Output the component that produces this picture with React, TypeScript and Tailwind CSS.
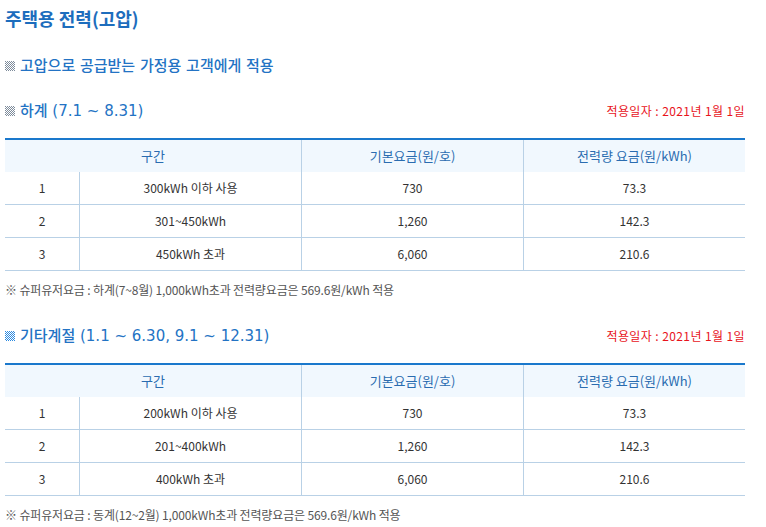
const font = { fontFamily: '"Noto Sans CJK KR", "Noto Sans", sans-serif' };
const heading = { fontFamily: '"DejaVu Sans", "Noto Sans CJK KR", sans-serif' };

type Row = { no: string; range: string; base: string; rate: string };

const summer: Row[] = [
  { no: '1', range: '300kWh 이하 사용', base: '730', rate: '73.3' },
  { no: '2', range: '301~450kWh', base: '1,260', rate: '142.3' },
  { no: '3', range: '450kWh 초과', base: '6,060', rate: '210.6' },
];

const other: Row[] = [
  { no: '1', range: '200kWh 이하 사용', base: '730', rate: '73.3' },
  { no: '2', range: '201~400kWh', base: '1,260', rate: '142.3' },
  { no: '3', range: '400kWh 초과', base: '6,060', rate: '210.6' },
];

function Checker({ id, color }: { id: string; color: string }) {
  return (
    <svg width="10" height="10" viewBox="0 0 10 10" className="shrink-0" shapeRendering="crispEdges">
      <defs>
        <pattern id={id} width="2" height="2" patternUnits="userSpaceOnUse">
          <rect x="0" y="0" width="1" height="1" fill={color} />
          <rect x="1" y="1" width="1" height="1" fill={color} />
        </pattern>
      </defs>
      <rect x="0" y="0" width="10" height="10" fill={`url(#${id})`} />
    </svg>
  );
}

function RateTable({ rows }: { rows: Row[] }) {
  return (
    <div className="w-[740px] text-[12px]">
      <div className="grid grid-cols-[74px_222px_222px_222px] h-[34px] border-t-2 border-[#1a78cc] bg-[#f1f8fe] text-[13px] text-[#2a6cb0]">
        <div className="col-span-2 flex items-center justify-center">구간</div>
        <div className="flex items-center justify-center border-l border-[#b9d1e6]">기본요금(원/호)</div>
        <div className="flex items-center justify-center border-l border-[#b9d1e6]">전력량 요금(원/kWh)</div>
      </div>
      {rows.map((r) => (
        <div
          key={r.no}
          className="grid grid-cols-[74px_222px_222px_222px] h-[33px] border-b border-[#b9d1e6] text-[#333333]"
        >
          <div className="flex items-center justify-center">{r.no}</div>
          <div className="flex items-center justify-center border-l border-[#b9d1e6]">{r.range}</div>
          <div className="flex items-center justify-center border-l border-[#b9d1e6]">{r.base}</div>
          <div className="flex items-center justify-center border-l border-[#b9d1e6]">{r.rate}</div>
        </div>
      ))}
    </div>
  );
}

function SeasonHeader({ id, color, title }: { id: string; color: string; title: string }) {
  return (
    <div className="flex items-center justify-between h-[20px] w-[740px]">
      <div className="flex items-center gap-[5px] text-[15px] font-medium text-[#2373c4]" style={heading}>
        <Checker id={id} color={color} />
        <span>{title}</span>
      </div>
      <span className="text-[12px] tracking-[0.4px] text-[#e8141c]">적용일자 : 2021년 1월 1일</span>
    </div>
  );
}

export default function App() {
  return (
    <div className="min-h-screen bg-white px-[5px]" style={font}>
      <h1 className="h-[36px] flex items-center text-[18px] font-bold text-[#1d6dbd]">주택용 전력(고압)</h1>

      <div
        className="mt-[20px] h-[20px] flex items-center gap-[5px] text-[15px] font-medium text-[#2373c4]"
        style={heading}
      >
        <Checker id="c1" color="#7d8b9b" />
        <span>고압으로 공급받는 가정용 고객에게 적용</span>
      </div>

      {/* 하계 */}
      <div className="mt-[25px]">
        <SeasonHeader id="c2" color="#7d8b9b" title="하계 (7.1 ~ 8.31)" />
      </div>
      <div className="mt-[17px]">
        <RateTable rows={summer} />
      </div>
      <p className="mt-[11px] h-[16px] flex items-center text-[12px] tracking-[-0.15px] text-[#555555]">
        ※ 슈퍼유저요금 : 하계(7~8월) 1,000kWh초과 전력량요금은 569.6원/kWh 적용
      </p>

      {/* 기타계절 */}
      <div className="mt-[28px]">
        <SeasonHeader id="c3" color="#2c8ae0" title="기타계절 (1.1 ~ 6.30, 9.1 ~ 12.31)" />
      </div>
      <div className="mt-[17px]">
        <RateTable rows={other} />
      </div>
      <p className="mt-[11px] h-[16px] flex items-center text-[12px] tracking-[-0.15px] text-[#555555]">
        ※ 슈퍼유저요금 : 동계(12~2월) 1,000kWh초과 전력량요금은 569.6원/kWh 적용
      </p>
    </div>
  );
}
